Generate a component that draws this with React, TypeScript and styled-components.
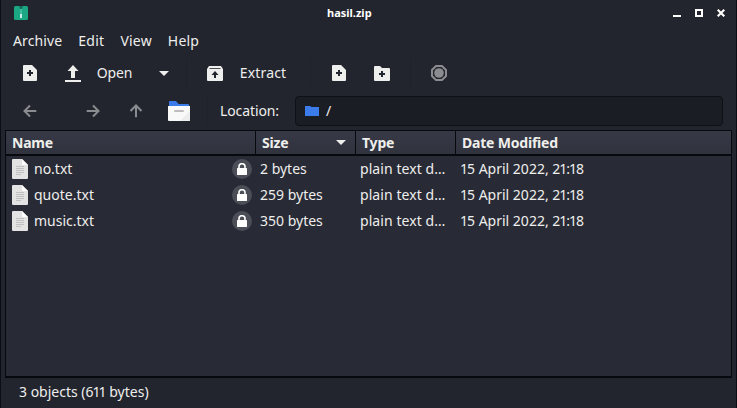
import React from "react";
import styled, { createGlobalStyle } from "styled-components";

const Global = createGlobalStyle`
  * { box-sizing: border-box; }
  body { margin: 0; background: #23252e; overflow: hidden; }
`;

const Window = styled.main`
  display: flex;
  flex-direction: column;
  width: 737px;
  height: 408px;
  padding: 0 4px 0 4px;
  border-left: 1px solid #0b0d14;
  border-right: 1px solid #0b0d14;
  background: #23252e;
  color: #eeeeec;
  font-family: "Noto Sans", sans-serif;
  font-size: 14px;
  line-height: 20px;
  white-space: nowrap;
`;

const Label = styled.span<{ $spacing?: number }>`
  letter-spacing: ${(p) => p.$spacing ?? 0}px;
`;

const TitleBar = styled.header`
  display: grid;
  grid-template-columns: 313px 1fr auto;
  align-items: center;
  height: 27px;
  padding: 0 7px 0 9px;
`;

const Title = styled.h1`
  margin: 0 0 2px;
  color: #fff;
  font-size: 11px;
  font-weight: 700;
`;

const WindowButtons = styled.div`
  display: flex;
  justify-content: flex-end;
  gap: 14px;
  margin-bottom: 1px;
`;

const Icon = styled.svg`
  display: block;
  flex: none;
`;

const AppIcon = styled(Icon)`
  margin-bottom: 1px;
`;

const MenuBar = styled.nav`
  display: flex;
  height: 28px;
  align-items: center;
  gap: 16px;
  padding-left: 8px;
`;

const Toolbar = styled.div<{ $height: number }>`
  display: flex;
  align-items: center;
  height: ${(p) => p.$height}px;
`;

const ToolButton = styled.button<{ $width: number; $muted?: boolean }>`
  display: flex;
  align-items: center;
  justify-content: center;
  flex: none;
  width: ${(p) => p.$width}px;
  height: 32px;
  padding: 0;
  border: 0;
  background: none;
  color: ${(p) => (p.$muted ? "#8b8c90" : "#eeeeec")};
  font: inherit;
`;

const Separator = styled.span<{ $left: number; $right: number }>`
  flex: none;
  width: 1px;
  height: 28px;
  margin: 0 ${(p) => p.$right}px 0 ${(p) => p.$left}px;
  background: #20222a;
`;

const LocationLabel = styled.label`
  width: 75px;
  margin-left: 4px;
  letter-spacing: -0.1px;
`;

const LocationField = styled.div`
  display: flex;
  align-items: center;
  gap: 7px;
  width: 428px;
  height: 30px;
  padding-left: 9px;
  border: 1px solid #0e1016;
  border-radius: 4px;
  background: #1b1d24;
`;

const Table = styled.section`
  display: flex;
  flex-direction: column;
  width: 727px;
  height: 248px;
  border: 1px solid #08090f;
  border-bottom-width: 2px;
  background: #282a35;
`;

const columns = "249px 100px 100px 1fr";

const HeadRow = styled.div`
  display: grid;
  grid-template-columns: ${columns};
  height: 25px;
  flex: none;
  border-bottom: 2px solid #08090f;
  background: linear-gradient(#373a46, #30333e);
`;

const HeadCell = styled.div`
  display: flex;
  align-items: center;
  justify-content: space-between;
  padding: 0 9px 0 6px;
  font-weight: 700;
  letter-spacing: -0.2px;
  ${Label} { letter-spacing: inherit; }
  & + & { border-left: 1px solid #08090f; }
`;

const Row = styled.div`
  display: grid;
  grid-template-columns: ${columns};
  height: 26px;
  flex: none;
`;

const Cell = styled.div`
  display: flex;
  align-items: center;
  padding-left: 5px;
`;

const NameCell = styled(Cell)`
  padding: 0 3px 0 6px;
  gap: 6px;
`;

const LockBadge = styled.span`
  display: grid;
  place-items: center;
  width: 20px;
  height: 20px;
  margin-left: auto;
  border-radius: 50%;
  background: #4b4d57;
`;

const StatusBar = styled.footer`
  display: flex;
  align-items: center;
  height: 27px;
  padding-left: 14px;
`;

/* Tightens the space on both sides of every "1", which is narrower than the other digits. */
const NumericText = ({ children }: { children: string }) => (
  <Label>
    {(children.match(/1|[^1](?=1)|[^1]+(?=[^1]1)|[^1]+/g) ?? []).map((part, i, parts) => {
      const spacing = (part === "1" ? -1 : 0) + (parts[i + 1] === "1" ? -1 : 0);
      return <Label key={i} $spacing={spacing}>{part}</Label>;
    })}
  </Label>
);

const PlusFile = () => (
  <Icon width="14" height="16" viewBox="0 0 14 16">
    <path d="M1 0H9L14 5V15Q14 16 13 16H1Q0 16 0 15V1Q0 0 1 0Z" fill="#eeeeec" />
    <path d="M7 5V11M4 8H10" stroke="#23252e" strokeWidth="2" />
  </Icon>
);

const Caret = () => (
  <Icon width="10" height="5" viewBox="0 0 10 5">
    <path d="M0 0H10L5 5Z" fill="#eeeeec" />
  </Icon>
);

const Arrow = ({ turn }: { turn: number }) => (
  <Icon width="14" height="14" viewBox="0 0 14 14">
    <path
      d="M13.3 7H2M7 1.5L1.5 7L7 12.5"
      transform={`rotate(${turn} 7 7)`}
      fill="none"
      stroke="#8b8c90"
      strokeWidth="2"
    />
  </Icon>
);

const TextFile = () => (
  <Icon width="16" height="20" viewBox="0 0 16 20">
    <path d="M1 0H10L16 6V19Q16 20 15 20H1Q0 20 0 19V1Q0 0 1 0Z" fill="#e3e3e3" />
    <path d="M10 0L16 6H11Q10 6 10 5Z" fill="#fff" />
    <path d="M4 7.5H12M4 9.5H12M4 11.5H12M4 13.5H12M4 15.5H9" stroke="#c0c0c0" />
  </Icon>
);

const files = [
  { name: "no.txt", size: "2 bytes" },
  { name: "quote.txt", size: "259 bytes" },
  { name: "music.txt", size: "350 bytes" },
];

export default function App() {
  return (
    <>
      <Global />
      <Window>
        <TitleBar>
          <AppIcon width="14" height="14" viewBox="0 0 14 14">
            <rect width="14" height="14" rx="1.5" fill="#1ba784" />
            <path d="M5 0H9L8 3H6Z" fill="#126d59" />
            <path d="M6 3H8V8H6Z" fill="#43bb9d" />
            <path d="M6 8H8V12H6Z" fill="#c8eee4" />
          </AppIcon>
          <Title>hasil.zip</Title>
          <WindowButtons>
            <Icon width="8" height="8" viewBox="0 0 8 8"><path d="M0 6H8V8H0Z" fill="#fff" /></Icon>
            <Icon width="8" height="8" viewBox="0 0 8 8"><path d="M1 1H7V7H1Z" fill="none" stroke="#fff" strokeWidth="2" /></Icon>
            <Icon width="8" height="8" viewBox="0 0 8 8"><path d="M.7 .7L7.3 7.3M7.3 .7L.7 7.3" stroke="#fff" strokeWidth="2.1" /></Icon>
          </WindowButtons>
        </TitleBar>
        <MenuBar>
          <Label $spacing={0.1}>Archive</Label>
          <Label $spacing={0.3}>Edit</Label>
          <Label $spacing={0.2}>View</Label>
          <Label $spacing={0.2}>Help</Label>
        </MenuBar>
        <Toolbar $height={36}>
          <ToolButton $width={50}><PlusFile /></ToolButton>
          <ToolButton $width={36}>
            <Icon width="16" height="17" viewBox="0 0 16 17">
              <path d="M8 0L13.5 6H10V13H6V6H2.5ZM0 15H16V17H0Z" fill="#eeeeec" />
            </Icon>
          </ToolButton>
          <ToolButton $width={47}><Label $spacing={-0.1}>Open</Label></ToolButton>
          <ToolButton $width={52}><Caret /></ToolButton>
          <Separator $left={-4} $right={3} />
          <ToolButton $width={50}>
            <Icon width="16" height="15" viewBox="0 0 16 15">
              <path d="M2 0H14L16 3V14Q16 15 15 15H1Q0 15 0 14V3Z" fill="#eeeeec" />
              <path d="M2.5 2.5H13.5" stroke="#4d4e54" />
              <path d="M8 5L11.5 9H9V12H7V9H4.5Z" fill="#23252e" />
            </Icon>
          </ToolButton>
          <ToolButton $width={46}><Label $spacing={0.15}>Extract</Label></ToolButton>
          <Separator $left={24} $right={2} />
          <ToolButton $width={52}><PlusFile /></ToolButton>
          <ToolButton $width={34}>
            <Icon width="16" height="15" viewBox="0 0 16 15">
              <path d="M1 0H6L8 2H15Q16 2 16 3V14Q16 15 15 15H1Q0 15 0 14V1Q0 0 1 0Z" fill="#eeeeec" />
              <path d="M8 5V11M5 8H11" stroke="#23252e" strokeWidth="2" />
            </Icon>
          </ToolButton>
          <Separator $left={11} $right={5} />
          <ToolButton $width={46} $muted>
            <Icon width="16" height="16" viewBox="0 0 16 16">
              <path d="M5 1H11L15 5V11L11 15H5L1 11V5Z" fill="none" stroke="currentColor" strokeWidth="2" />
              <circle cx="8" cy="8" r="4.8" fill="currentColor" />
            </Icon>
          </ToolButton>
        </Toolbar>
        <Toolbar $height={39}>
          <ToolButton $width={50}><Arrow turn={0} /></ToolButton>
          <ToolButton $width={75}><Arrow turn={180} /></ToolButton>
          <ToolButton $width={12}><Arrow turn={90} /></ToolButton>
          <ToolButton $width={74}>
            <Icon width="22" height="20" viewBox="0 0 22 20">
              <path d="M1 1Q1 0 2 0H8L10.5 3H20Q21 3 21 4V7H1Z" fill="#3c7cea" />
              <path d="M0 5H22V19Q22 20 21 20H1Q0 20 0 19Z" fill="#f9f9f9" />
              <path d="M22 10V19Q22 20 21 20H12Z" fill="#ededed" />
              <path d="M7 10H15" stroke="#bdbdbd" strokeWidth="2" strokeLinecap="round" />
            </Icon>
          </ToolButton>
          <Separator $left={-9} $right={8} />
          <LocationLabel>Location:</LocationLabel>
          <LocationField>
            <Icon width="14" height="10" viewBox="0 0 14 10">
              <path d="M0 0H5L6.5 1H14V10H0Z" fill="#3c7cea" />
            </Icon>
            <Label>/</Label>
          </LocationField>
        </Toolbar>
        <Table>
          <HeadRow>
            <HeadCell><Label>Name</Label></HeadCell>
            <HeadCell><Label>Size</Label><Caret /></HeadCell>
            <HeadCell><Label>Type</Label></HeadCell>
            <HeadCell><Label>Date Modified</Label></HeadCell>
          </HeadRow>
          {files.map((file) => (
            <Row key={file.name}>
              <NameCell>
                <TextFile />
                <Label>{file.name}</Label>
                <LockBadge>
                  <Icon width="10" height="12" viewBox="0 0 10 12">
                    <path d="M2 6V3.5A3 2.8 0 0 1 8 3.5V6" fill="none" stroke="#fff" strokeWidth="1.6" />
                    <rect y="5" width="10" height="7" rx=".5" fill="#fff" />
                  </Icon>
                </LockBadge>
              </NameCell>
              <Cell><Label>{file.size}</Label></Cell>
              <Cell><Label $spacing={0.07}>plain text d…</Label></Cell>
              <Cell><NumericText>15 April 2022, 21:18</NumericText></Cell>
            </Row>
          ))}
        </Table>
        <StatusBar><NumericText>3 objects (611 bytes)</NumericText></StatusBar>
      </Window>
    </>
  );
}
